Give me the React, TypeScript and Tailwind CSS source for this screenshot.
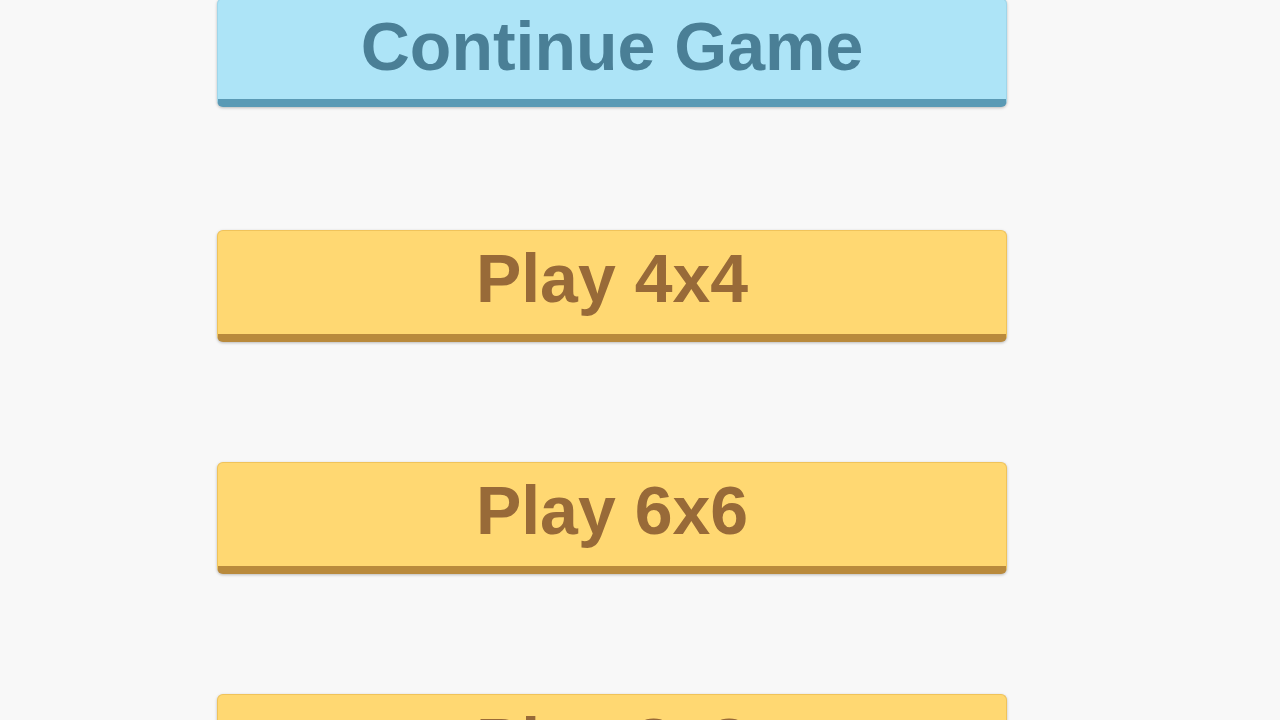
import React from "react";

const yellow =
  "w-[790px] h-[112px] shrink-0 rounded-[6px] bg-[#ffd872] border border-[#f0c35a] border-b-[8px] border-b-[#b98a3c] shadow-[0_1px_3px_rgba(0,0,0,0.25)] flex items-center justify-center text-[68px] font-bold text-[#986a38] leading-none pb-[10px]";

export default function App() {
  return (
    <div className="w-[1280px] h-[720px] overflow-hidden bg-[#f8f8f8]" style={{ fontFamily: '"Liberation Sans", Arial, sans-serif' }}>
      <div className="flex flex-col gap-[120px] pl-[217px] -mt-[2px]">
        <button className="w-[790px] h-[109px] shrink-0 mb-[3px] rounded-[6px] bg-[#ade4f7] border border-[#9fd6ea] border-b-[8px] border-b-[#5a9ab5] shadow-[0_1px_3px_rgba(0,0,0,0.25)] flex items-center justify-center text-[68px] font-bold text-[#4a7f96] leading-none pb-[6px]">
          Continue Game
        </button>
        <button className={yellow}>Play 4x4</button>
        <button className={yellow}>Play 6x6</button>
        <button className={yellow}>Play 8x8</button>
      </div>
    </div>
  );
}
